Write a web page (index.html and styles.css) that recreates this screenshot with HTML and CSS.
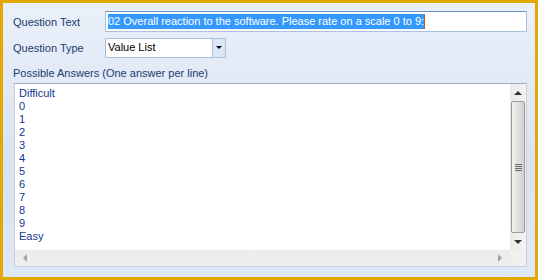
FILE: index.html
```html
<!DOCTYPE html>
<html>
<head>
	<meta charset="UTF-8">
	<title>Question</title>
	<link rel="stylesheet" href="styles.css">
</head>
<body>
<div class="frame">
	<div class="row">
		<span class="label">Question Text</span>
		<div class="textbox"><span class="selected">02 Overall reaction to the software. Please rate on a scale 0 to 9:</span></div>
	</div>
	<div class="row">
		<span class="label">Question Type</span>
		<div class="combo">
			<span class="combo-value">Value List</span>
			<span class="combo-btn"><i class="arrow-down"></i></span>
		</div>
	</div>
	<div class="caption">Possible Answers (One answer per line)</div>
	<div class="memo">
		<div class="lines">
			<div>Difficult</div>
			<div>0</div>
			<div>1</div>
			<div>2</div>
			<div>3</div>
			<div>4</div>
			<div>5</div>
			<div>6</div>
			<div>7</div>
			<div>8</div>
			<div>9</div>
			<div>Easy</div>
		</div>
		<div class="vscroll">
			<span class="sb-btn"><i class="tri-up"></i></span>
			<span class="thumb"><i class="grip"></i></span>
			<span class="sb-btn"><i class="tri-down"></i></span>
		</div>
		<div class="hscroll">
			<i class="tri-left"></i>
			<i class="tri-right"></i>
		</div>
		<div class="corner"></div>
	</div>
</div>
</body>
</html>
```
FILE: styles.css
```css
html, body {
	margin: 0;
	padding: 0;
}
body {
	font-family: "Liberation Sans", Arial, sans-serif;
	font-size: 11px;
	color: #1b3b6e;
}
.frame {
	width: 538px;
	height: 280px;
	box-sizing: border-box;
	border: 3px solid #e3a804;
	background: linear-gradient(#eaf0f9, #d7e3f3 60%, #dfe8f6);
	padding: 8px 8px 10px 10px;
	display: flex;
	flex-direction: column;
}
.row {
	display: flex;
	align-items: center;
	height: 21px;
	margin-bottom: 5px;
}
.label {
	width: 92px;
}
.textbox {
	flex: 1;
	height: 21px;
	box-sizing: border-box;
	background: #fff;
	border: 1px solid #a9c1df;
	border-top-color: #6a92c6;
	padding: 2px 2px 0 2px;
	line-height: 15px;
	white-space: nowrap;
	overflow: hidden;
}
.selected {
	background: #3399ff;
	color: #fff;
	display: inline-block;
	border-right: 1px solid #c85a00;
}
.combo {
	width: 121px;
	height: 20px;
	box-sizing: border-box;
	background: #fff;
	border: 1px solid #a7bedc;
	display: flex;
	align-items: stretch;
}
.combo-value {
	flex: 1;
	padding: 2px 0 0 2px;
	color: #000;
}
.combo-btn {
	width: 12px;
	background: #dce7f5;
	border-left: 1px solid #a7bedc;
	display: flex;
	align-items: center;
	justify-content: center;
}
.arrow-down {
	border-left: 3px solid transparent;
	border-right: 3px solid transparent;
	border-top: 3px solid #000;
}
.caption {
	margin: 4px 0 3px 0;
	line-height: 13px;
}
.memo {
	flex: 1;
	margin-left: 1px;
	background: #fff;
	border: 1px solid #c9d0da;
	border-top-color: #a6acb5;
	display: grid;
	grid-template-columns: 1fr 16px;
	grid-template-rows: 1fr 16px;
}
.lines {
	padding: 3px 4px;
	color: #15358f;
	line-height: 13px;
}
.vscroll {
	background: linear-gradient(to right, #e9e9e9, #f3f3f3);
	display: flex;
	flex-direction: column;
}
.sb-btn {
	height: 17px;
	display: flex;
	align-items: center;
	justify-content: center;
}
.thumb {
	flex: 1;
	margin: 0 1px;
	border: 1px solid #9b9b9b;
	border-radius: 2px;
	background: linear-gradient(to right, #f2f2f2, #e1e1e1 50%, #cfcfcf);
	display: flex;
	align-items: center;
	justify-content: center;
}
.grip {
	width: 7px;
	height: 7px;
	background: repeating-linear-gradient(#6a6a6a 0 1px, transparent 1px 2px);
}
.tri-up {
	border-left: 4px solid transparent;
	border-right: 4px solid transparent;
	border-bottom: 4px solid #333;
}
.tri-down {
	border-left: 4px solid transparent;
	border-right: 4px solid transparent;
	border-top: 4px solid #333;
}
.hscroll {
	background: linear-gradient(#ebebeb, #efefef);
	display: flex;
	align-items: center;
	justify-content: space-between;
	padding: 0 8px;
}
.tri-left {
	border-top: 4px solid transparent;
	border-bottom: 4px solid transparent;
	border-right: 4px solid #a3a3a3;
}
.tri-right {
	border-top: 4px solid transparent;
	border-bottom: 4px solid transparent;
	border-left: 4px solid #a3a3a3;
}
.corner {
	background: #f0f0f0;
}
```
